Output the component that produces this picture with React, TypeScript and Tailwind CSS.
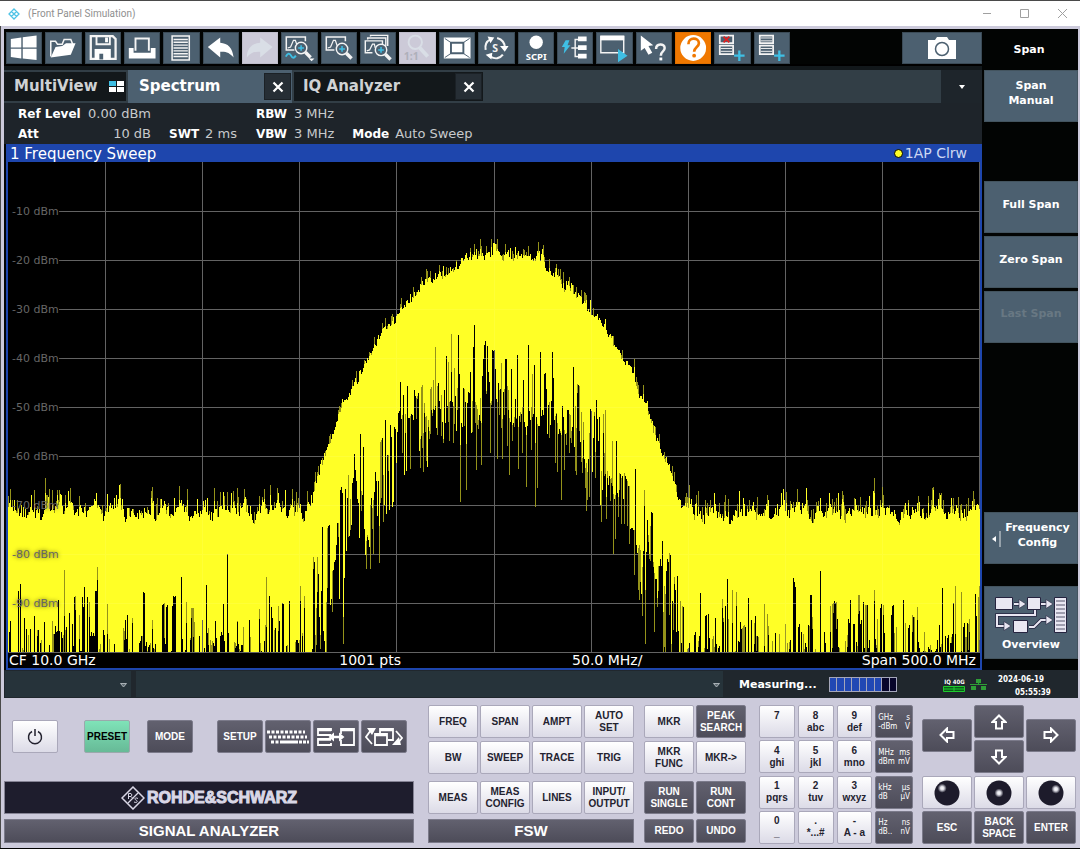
import React from "react";

type Kids = { children?: React.ReactNode };

const YELLOW = "#ffff26";

/* ---------- Spectrum trace ---------- */

// x, upper edge, deepest solid edge, lowest excursion (plot coordinates)
const ENVELOPE: number[][] = [
  [0, 350, 424, 535],
  [298, 350, 422, 535],
  [304, 338, 392, 520],
  [308, 320, 375, 505],
  [317, 290, 352, 485],
  [328, 262, 330, 450],
  [335, 239, 312, 430],
  [347, 222, 284, 412],
  [362, 194, 262, 392],
  [377, 168, 248, 370],
  [390, 154, 238, 340],
  [400, 139, 222, 318],
  [412, 128, 210, 300],
  [427, 114, 196, 288],
  [444, 110, 190, 284],
  [457, 101, 184, 278],
  [472, 96, 180, 272],
  [486, 94, 188, 268],
  [494, 97, 192, 264],
  [522, 98, 190, 278],
  [534, 100, 194, 284],
  [547, 114, 200, 282],
  [562, 129, 214, 294],
  [582, 150, 234, 316],
  [594, 161, 244, 332],
  [607, 186, 262, 352],
  [618, 200, 280, 388],
  [628, 222, 306, 408],
  [642, 258, 336, 425],
  [652, 284, 364, 455],
  [664, 320, 390, 500],
  [674, 345, 412, 525],
  [684, 352, 424, 535],
  [972, 350, 424, 535],
];

// Isolated deep notches reaching up into the solid area
const NOTCHES: number[][] = [
  [12, 422], [56, 408], [89, 405], [173, 415], [219, 392], [258, 415], [76, 425],
  [466, 163], [450, 173], [443, 172], [477, 179], [520, 183], [427, 185],
  [812, 409], [719, 417], [785, 416], [660, 400], [786, 420],
  [392, 220], [352, 272], [588, 238], [597, 248], [486, 188], [532, 190],
  [544, 190], [565, 205],
];

const SPIKES: number[][] = [
  [483, 85], [485, 81], [486, 81], [487, 82], [468, 87], [500, 88], [529, 89],
  [531, 89], [60, 329], [99, 332], [88, 331], [223, 331], [277, 328],
  [731, 329], [865, 329], [925, 328],
];

function random(seed: number) {
  let s = seed;
  return () => {
    s = (s + 0x6d2b79f5) | 0;
    let t = Math.imul(s ^ (s >>> 15), 1 | s);
    t = (t + Math.imul(t ^ (t >>> 7), 61 | t)) ^ t;
    return ((t ^ (t >>> 14)) >>> 0) / 4294967296;
  };
}

function buildTrace() {
  const rnd = random(4021);
  const notch = new Map(NOTCHES.map((n) => [n[0], n[1]] as [number, number]));
  const spike = new Map(SPIKES.map((n) => [n[0], n[1]] as [number, number]));
  let solid = "";
  let dim = "";
  let seg = 0;
  let drift = 0;
  let low = 0.5;
  for (let x = 0; x < 972; x++) {
    while (seg < ENVELOPE.length - 2 && x >= ENVELOPE[seg + 1][0]) seg++;
    const a = ENVELOPE[seg];
    const b = ENVELOPE[seg + 1];
    const t = (x - a[0]) / (b[0] - a[0]);
    const at = (i: number) => a[i] + (b[i] - a[i]) * t;
    const floor = x < 300 || x > 676;
    const amp = floor ? 1 : 0.6;
    drift = drift * 0.65 + (rnd() - 0.5) * 13 * amp;
    let top = at(1) + drift - Math.pow(rnd(), 5) * 16 * amp;
    if (rnd() < 0.72) low = rnd();
    const reach = Math.pow(low, floor ? 0.75 : 0.95);
    let bottom = at(2) + (at(3) - at(2)) * reach * (0.85 + rnd() * 0.15);
    if (!floor && rnd() < 0.04) bottom += 15 + rnd() * 35;
    if (notch.has(x)) bottom = notch.get(x)!;
    if (spike.has(x)) top = spike.get(x)!;
    bottom = Math.min(490, bottom);
    top = Math.round(top);
    bottom = Math.round(bottom);
    solid += `M${x + 0.5} ${top}V${bottom}`;
    if (rnd() < 0.4) {
      const down = Math.min(490, bottom + Math.round(rnd() * 65));
      dim += `M${x + 0.5} ${bottom}V${down}`;
    }
    if (rnd() < 0.3) {
      dim += `M${x + 0.5} ${top - Math.round(rnd() * 15 * amp + 2)}V${top}`;
    }
  }
  return { solid, dim };
}

const TRACE = buildTrace();
const ROWS = [1, 2, 3, 4, 5, 6, 7, 8, 9, 10].map((i) => i * 49 + 0.5);
const COLS = [97.5, 194.5, 291.5, 388.5, 486.5, 583.5, 680.5, 777.5, 874.5, 971.5];
const GRID =
  ROWS.map((y) => `M${y > 480 ? 0 : 51} ${y}H972`).join("") +
  COLS.map((x) => `M${x} 0V491`).join("");

function Plot() {
  return (
    <div className="relative bg-black">
      <svg
        viewBox="0 0 972 491"
        preserveAspectRatio="none"
        className="block h-[491px] w-full"
        shapeRendering="crispEdges"
        role="img"
        aria-label="Frequency sweep trace"
      >
        <path d={GRID} stroke="#565656" fill="none" />
        <path d={TRACE.dim} stroke="#94921a" fill="none" />
        <path d={TRACE.solid} stroke={YELLOW} fill="none" />
        <path d={GRID} stroke="#ffffff" strokeOpacity="0.08" fill="none" />
      </svg>
      <div className="absolute top-0 left-1 pt-[26px] text-[11px] text-[#666666] [text-shadow:0_0_4px_#000000aa]">
        {[10, 20, 30, 40, 50, 60, 70, 80, 90].map((v) => (
          <div key={v} className="flex h-[49px] items-center">
            -{v} dBm
          </div>
        ))}
      </div>
    </div>
  );
}

/* ---------- Toolbar ---------- */

const W = "#f4f4f4";
const C = "#3fbfe4";

const Ico = ({ children }: Kids) => (
  <svg viewBox="0 0 36 32" className="h-8 w-9" fill="none">
    {children}
  </svg>
);

const Magnifier = ({ x, y }: { x: number; y: number }) => (
  <g transform={`translate(${x} ${y})`}>
    <circle r="6" fill="#4c6070" stroke={W} strokeWidth="1.5" />
    <path d="M-3 0H3M0-3V3" stroke={C} strokeWidth="1.6" />
    <path d="M4.5 4.5L10 10" stroke={W} strokeWidth="3.6" />
  </g>
);

const Curve = () => <path d="M6 16l3-1 3-7 2 0 2 6" stroke={W} strokeWidth="1.3" />;

const TOOLS: { name: string; tone?: string; icon: React.ReactNode }[] = [
  { name: "Windows", icon: <path d="M4 6.5L15 5v10.400H4zM16.500 4.800L31 3v12.400H16.500zM4 16.800h11V27L4 25.500zM16.500 16.800H31V28.500L16.500 27z" fill="#fff" /> },
  { name: "Open", icon: (<><path d="M5 25V9h5l2 3h5l2-5h7l2 5" stroke={W} strokeWidth="1.6" /><path d="M10 15l7-1 4-3h10l-5 12L5 26z" fill="#fff" /></>) },
  { name: "Save", icon: (<><path d="M5 3.500h23l3 3v21H5z" stroke={W} strokeWidth="2.400" /><path d="M11 4v8h14V4" stroke={W} strokeWidth="2" /><path d="M9 17h17v11H9z" fill="#fff" /><path d="M14 22h4v6h-4z" fill="#4c6070" /><path d="M20 5h3v5h-3z" fill="#fff" /></>) },
  { name: "Print", icon: (<><path d="M11 19V6h14v13" stroke={W} strokeWidth="2" /><path d="M4 16h5v5h18v-5h5v11H4z" fill="#fff" /></>) },
  { name: "Report", icon: (<><path d="M8.500 3.500h18v25h-18z" stroke={W} strokeWidth="1.600" /><path d="M10 7h15M10 10h15M10 13h15M10 16h15M10 19h15M10 22h15M10 25h15" stroke={W} strokeWidth="1.500" /></>) },
  { name: "Undo", icon: <path d="M4 15L17 5v5.500c8 .5 13 5.500 14 15.500-4-5-8-6.500-14-6v6z" fill="#fff" /> },
  { name: "Redo", tone: "off", icon: <path d="M31 15L18 5v5.500C10 11 4 16 4 26c4-5 8-6.500 14-6v6z" fill="#d9dee6" /> },
  { name: "Zoom menu", icon: (<><path d="M13 18H4.500V4.500h20V9" stroke={W} strokeWidth="1.600" /><Curve /><path d="M4 25c2-4 4-4 5.500-1s3 3 5 0" stroke={C} strokeWidth="2" /><Magnifier x={20} y={16} /><path d="M28 27h6l-3 3z" fill="#fff" /></>) },
  { name: "Zoom", icon: (<><path d="M13 18H4.500V4.500h20V9" stroke={W} strokeWidth="1.600" /><Curve /><Magnifier x={21} y={17} /></>) },
  { name: "Multi zoom", icon: (<><path d="M12 21H4.500V8.500h18V12M7 7V5.500h19V14M10 4V2.800h18V14" stroke={W} strokeWidth="1.500" /><path d="M6 19l3-1 3-6 2 0 1 4" stroke={W} strokeWidth="1.300" /><Magnifier x={21} y={18} /></>) },
  { name: "Zoom off", tone: "off", icon: (<><circle cx="16" cy="10" r="7" stroke="#d9dee6" strokeWidth="2" /><path d="M20 15l9 10" stroke="#d9dee6" strokeWidth="4" /><text x="4" y="29" fontSize="11" fontWeight="bold" fontFamily="Noto Sans, sans-serif" fill="#aeb0ba">1:1</text></>) },
  { name: "Display", icon: (<><path d="M4 5h28v22H4z" fill="#fff" /><path d="M11.500 10.500h13v11h-13z" fill="#fff" stroke="#4c6070" strokeWidth="2" /><path d="M5 6l6 4M31 6l-6 4M5 26l6-4M31 26l-6-4" stroke="#4c6070" strokeWidth="1" /></>) },
  { name: "Sequencer", icon: (<><path d="M7 18c-1-5 1-9 5-11M19 5.500c5 1.500 8 5 8 10M25 23c-3 4-8 5-13 2" stroke={W} strokeWidth="2.200" /><path d="M9 4l7 1-4 6zM22 14h9l-4 6zM14 21l-7 2 6 5z" fill="#fff" /><text x="14" y="20" fontSize="11" fontWeight="bold" fontFamily="Noto Sans, sans-serif" fill={W}>S</text></>) },
  { name: "SCPI", icon: (<><circle cx="18" cy="10" r="7" fill="#fff" /><text x="18" y="29" textAnchor="middle" fontSize="10" fontWeight="bold" fontFamily="Noto Sans, sans-serif" fill="#fff">SCPI</text></>) },
  { name: "Trigger tree", icon: (<><path d="M8 8h4l-2 5h3L6 22l1-7H4z" fill={C} /><path d="M14 16h8M22 7h-4v18h4" stroke={W} strokeWidth="1.500" /><path d="M21 4h9v5h-9zM21 13h9v5h-9zM21 22h9v5h-9z" fill="#fff" /></>) },
  { name: "Window", icon: (<><path d="M4 4h24v17H4z" stroke={W} strokeWidth="1.500" /><path d="M3.500 3h25v5h-25z" fill="#fff" /><path d="M22 17l10 7-10 7z" fill={C} /></>) },
  { name: "Context help", icon: (<><path d="M4 3l13 10-5 1 4 7-4 2-4-7-4 3z" fill="#fff" /><path d="M20 17c0-6 9-6 9-1 0 4-4 3-4 8" stroke={W} strokeWidth="2.600" /><path d="M23.500 26h3v3h-3z" fill="#fff" /></>) },
  { name: "Help", tone: "help", icon: (<><circle cx="18" cy="16" r="13.500" fill="#fff" /><path d="M13 12c0-8 11-7 11-1 0 4-5 4-5 9" stroke="#f07800" strokeWidth="2.800" /><circle cx="19" cy="24" r="2" fill="#f07800" /></>) },
  { name: "Remove from list", icon: (<><path d="M5 3h14v8H5zM5 13.500h14v9H5z" stroke={W} strokeWidth="1.800" /><path d="M9 4l6 6M15 4l-6 6" stroke="#e02020" strokeWidth="1.800" /><path d="M6 16.500h12M6 19.500h12" stroke={W} /><path d="M20 24h11M25.500 18.500v11" stroke={C} strokeWidth="2.400" /></>) },
  { name: "Add to list", icon: (<><path d="M5 3h14v8H5zM5 13.500h14v9H5z" stroke={W} strokeWidth="1.800" /><path d="M6 5.500h12M6 8.500h12M6 16.500h12M6 19.500h12" stroke={W} /><path d="M20 24h11M25.500 18.500v11" stroke={C} strokeWidth="2.400" /></>) },
];

const TOOL_TONES: Record<string, string> = {
  normal: "bg-[#4c6070] border-[#3b4b57]",
  off: "bg-[#cccad8] border-[#bfbdcb]",
  help: "bg-[#f07800] border-[#e07000]",
};

function Toolbar() {
  return (
    <div className="flex items-start justify-between border-b-2 border-black bg-[#020403] pt-[3px] pl-[2px]">
      <div className="grid w-[784px] grid-cols-20 gap-[3px]">
        {TOOLS.map((t) => (
          <button
            key={t.name}
            aria-label={t.name}
            className={`flex h-8 items-center justify-center overflow-hidden border ${TOOL_TONES[t.tone ?? "normal"]}`}
          >
            <Ico>{t.icon}</Ico>
          </button>
        ))}
      </div>
      <button aria-label="Screenshot" className="flex h-8 w-20 items-center justify-center border border-[#3b4b57] bg-[#4c6070]">
        <svg viewBox="0 0 28 22" className="h-[22px] w-7">
          <path d="M0 3h7l2-3h10l2 3h7v19H0z" fill="#fff" />
          <circle cx="14" cy="12" r="6.500" fill="none" stroke="#4c6070" strokeWidth="1.500" />
        </svg>
      </button>
    </div>
  );
}

/* ---------- Tabs and channel info ---------- */

const CloseX = ({ label }: { label: string }) => (
  <button aria-label={label} className="flex h-[27px] w-[27px] items-center justify-center border border-[#1b2126] bg-[#262e35]">
    <svg viewBox="0 0 12 12" className="size-3">
      <path d="M1.500 1.500l9 9M10.500 1.500l-9 9" stroke="#fff" strokeWidth="2.200" />
    </svg>
  </button>
);

function Tabs() {
  return (
    <div className="flex h-[33px] bg-[#323e46] text-[15px] font-bold">
      <button className="mt-[2px] mr-[2px] flex h-[29px] w-[122px] items-center justify-between bg-[#13181b] pr-[2px] pl-[10px] text-[#cfd2d4]">
        MultiView
        <svg viewBox="0 0 15 11" className="h-[11px] w-[15px]">
          <path d="M0 0h7v5H0z" fill={C} />
          <path d="M8 0h7v5H8zM0 6h7v5H0zM8 6h7v5H8z" fill="#fff" />
        </svg>
      </button>
      <div className="flex w-[164px] items-center justify-between bg-[#4c6070] pr-px pl-[11px] text-white">
        <button>Spectrum</button>
        <CloseX label="Close Spectrum" />
      </div>
      <div className="mt-[2px] ml-[2px] flex h-[29px] w-[189px] items-center justify-between bg-[#13181b] pr-px pl-[9px] text-[#cfd2d4]">
        <button>IQ Analyzer</button>
        <CloseX label="Close IQ Analyzer" />
      </div>
      <button aria-label="More tabs" className="ml-auto flex w-[41px] items-center justify-center bg-[#1e252b]">
        <svg viewBox="0 0 6 4" className="h-1 w-[6px]">
          <path d="M0 0h6L3 4z" fill="#fff" />
        </svg>
      </button>
    </div>
  );
}

const K = ({ children }: Kids) => <b className="text-[12px] text-white">{children}</b>;

function ChannelInfo() {
  return (
    <div className="grid grid-cols-[133px_69px_auto_1fr] grid-rows-[20px_20px] gap-x-[18px] bg-[#1e242a] pt-px pl-[14px] text-[13px] leading-[22px] text-[#c8cacc]">
      <div className="flex items-center justify-between"><K>Ref Level</K><span>0.00 dBm</span></div>
      <span />
      <div className="flex items-center gap-[7px]"><K>RBW</K><span>3 MHz</span></div>
      <span />
      <div className="flex items-center justify-between"><K>Att</K><span>10 dB</span></div>
      <div className="flex items-center gap-[6px]"><K>SWT</K><span className="whitespace-nowrap">2 ms</span></div>
      <div className="flex items-center gap-[7px]"><K>VBW</K><span>3 MHz</span></div>
      <div className="flex items-center gap-[6px]"><K>Mode</K><span>Auto Sweep</span></div>
    </div>
  );
}

/* ---------- Softkeys ---------- */

const SOFT = "flex h-[52px] w-full items-center justify-center border border-[#43545f] bg-[#4c6070] pb-[6px] text-center text-[11px] leading-[15px] font-bold text-white";

function Softkeys() {
  return (
    <aside className="flex w-[96px] flex-col gap-[3px] bg-[#020403] pl-[2px]">
      <h2 className="flex h-[38px] items-center justify-center pt-1 pr-1 text-[11px] font-bold text-white">Span</h2>
      <button className={SOFT}>Span<br />Manual</button>
      <div className="h-[53px]" />
      <button className={SOFT}>Full Span</button>
      <button className={SOFT}>Zero Span</button>
      <button disabled className="flex h-[52px] w-full items-center justify-center border border-[#43545f] bg-[#4c6070] pb-[6px] text-[11px] font-bold text-[#687883]">Last Span</button>
      <div className="h-[163px]" />
      <button className={SOFT}>
        <svg viewBox="0 0 9 16" className="mt-2 mr-1 h-4 w-[9px]">
          <path d="M4 5v6L0 8z" fill="#fff" />
          <path d="M8 0v16" stroke="#dfe3e6" />
        </svg>
        <span>Frequency<br />Config</span>
      </button>
      <button className="mt-[19px] flex h-[73px] w-full flex-col items-center justify-end gap-[5px] border border-[#43545f] bg-[#4c6070] pb-[6px] text-[11px] leading-[14px] font-bold text-white">
        <svg viewBox="0 0 72 36" className="h-9 w-[72px]" fill="none">
          <g fill="#e9e7f2" stroke="#25233f">
            <path d="M.5.5h17v12H.5zM32.500.5h13v12h-13zM18.500 23.500h14v12h-14z" />
            <path d="M59.500.5h12v35h-12z" />
          </g>
          <path d="M19 7h6M46 7h6M40 13v5H2v11h8M34 30h5l7-7h6" stroke="#25233f" strokeWidth="3.500" />
          <path d="M19 7h6M46 7h6M40 13v5H2v11h8M34 30h5l7-7h6" stroke="#e9e7f2" strokeWidth="2" />
          <path d="M24 2.500L31 7l-7 4.500zM51 2.500L58 7l-7 4.500zM9 24.500l7 4.500-7 4.500zM51 18.500l7 4.500-7 4.500z" fill="#e9e7f2" stroke="#25233f" strokeWidth=".6" />
          <path d="M61 4h9M61 8h9M61 12h9M61 16h9M61 20h9M61 24h9M61 28h9M61 32h9" stroke="#55546a" />
        </svg>
        Overview
      </button>
    </aside>
  );
}

/* ---------- Status bar ---------- */

const DropMark = () => (
  <svg viewBox="0 0 7 5" className="h-[5px] w-[7px]">
    <path d="M.5.5h6L3.500 4z" fill="#5f6b72" stroke="#a8b0b5" />
  </svg>
);

function StatusBar() {
  return (
    <footer className="flex h-7 items-center bg-[#20272d] font-bold text-white">
      <button aria-label="Status list" className="mr-[5px] ml-px flex h-[26px] w-[126px] items-center justify-end bg-[#26333a] pt-[2px] pr-1"><DropMark /></button>
      <button aria-label="Message list" className="flex h-[26px] flex-1 items-center justify-end bg-[#26333a] pt-[2px] pr-[3px]"><DropMark /></button>
      <span className="ml-4 w-[90px] pt-[2px] text-[11px]">Measuring...</span>
      <div className="flex h-[15px] w-[68px] gap-px border border-[#a4a6ba] bg-[#a4a6ba]">
        {[0, 1, 2, 3, 4, 5, 6].map((i) => (
          <i key={i} className="flex-1 bg-[#2148b4]" />
        ))}
        <i className="flex-1 bg-[#07052b]" />
        <i className="flex-1 bg-[#07052b]" />
      </div>
      <div className="ml-[46px] w-[23px] text-center font-['DejaVu_Sans_Condensed','DejaVu_Sans',sans-serif] text-[6px] leading-[9px] whitespace-nowrap">
        IQ 40G
        <svg viewBox="0 0 22 6" className="h-[6px] w-[22px]">
          <path d="M.5.5h21v5H.5zM11 0v6M0 3h22" fill="#0b5c18" stroke="#1ecb2e" />
        </svg>
      </div>
      <svg viewBox="0 0 17 12" className="mr-[9px] ml-[4px] h-3 w-[17px]">
        <path d="M6 1h5v4H6zM1 8h5v4H1zM11 8h5v4h-5z" fill="#2f9e37" />
        <path d="M0 6.500h17M8.500 4v3" stroke="#2f9e37" />
      </svg>
      <div className="w-[82px] pt-[3px] pl-[2px] font-['DejaVu_Sans_Condensed','DejaVu_Sans',sans-serif] text-[8px] leading-[13px]">
        <div>2024-06-19</div>
        <div className="pl-[17px]">05:55:39</div>
      </div>
    </footer>
  );
}

/* ---------- Front panel keys ---------- */

const KEY_TONES: Record<string, string> = {
  light: "border-[#aaa8ba] bg-linear-to-b from-white to-[#dcdbe7] text-[#23222f]",
  dark: "border-[#7b7a8a] bg-linear-to-b from-[#62616f] to-[#4d4c59] text-white",
  green: "border-[#9aa9ac] bg-linear-to-b from-[#7fe3b8] to-[#67ba97] text-black",
};

function Key({ tone = "light", className = "h-[33px]", label, children }: Kids & { tone?: string; className?: string; label?: string }) {
  return (
    <button
      aria-label={label}
      className={`flex min-w-0 items-center justify-center rounded-[2px] border text-center leading-3 whitespace-pre-line ${KEY_TONES[tone]} ${className}`}
    >
      {children}
    </button>
  );
}

function SystemKeys() {
  const size = "h-[33px] w-[46px]";
  return (
    <section className="flex flex-[410] flex-col">
      <div className="mt-[15px] flex pl-2">
        <Key className={size} label="Power">
          <svg viewBox="0 0 16 16" className="size-4" fill="none" stroke="#23222f" strokeWidth="1.500">
            <path d="M5 2.500a6.500 6.500 0 1 0 6 0M8 0v7" />
          </svg>
        </Key>
        <Key tone="green" className="ml-[26px] h-[33px] w-[46px]">PRESET</Key>
        <Key tone="dark" className="ml-[17px] h-[33px] w-[46px]">MODE</Key>
        <div className="ml-6 flex gap-[2px]">
          <Key tone="dark" className={size}>SETUP</Key>
          <Key tone="dark" className={size} label="Keyboard">
            <svg viewBox="0 0 42 14" className="h-[14px] w-[42px]">
              <path d="M0 2h38M2 7h38M4 12h8" stroke="#fff" strokeWidth="3" strokeDasharray="3 1.500" />
              <path d="M13 12h18" stroke="#fff" strokeWidth="3" />
              <path d="M32 12h10" stroke="#fff" strokeWidth="3" strokeDasharray="3 1" />
            </svg>
          </Key>
          <Key tone="dark" className={size} label="Split screen">
            <svg viewBox="0 0 38 18" className="h-[18px] w-[38px]" fill="none" stroke="#fff" strokeWidth="1.800">
              <path d="M14 7H1V1h13v2M14 11H1v6h13v-2M24 6V1h13v16H24v-5" />
              <path d="M1 2h13M1 11.500h13M24 2h13" strokeWidth="2.500" />
              <path d="M15 9h9" strokeWidth="2.500" />
              <path d="M17 4.500v9L11.500 9zM22 4.500v9L27.500 9z" fill="#fff" stroke="none" />
            </svg>
          </Key>
          <Key tone="dark" className={size} label="Switch window">
            <svg viewBox="0 0 38 20" className="h-5 w-[38px]" fill="none" stroke="#fff" strokeWidth="1.800">
              <path d="M15 6V2h13v11h-5" />
              <path d="M10 7h12v11H10z" />
              <path d="M10 8h12M15 3h13" strokeWidth="2.500" />
              <path d="M7 17L1 10l5-7M31 4l6 7-5 6" />
              <path d="M2 1h9l-4 7zM27 18h9l-2-8z" fill="#fff" stroke="none" />
            </svg>
          </Key>
        </div>
      </div>
      <div className="mt-7 flex h-[33px] items-center justify-center gap-[2px] border border-[#858394] bg-[#1e1d2d] text-[16px] font-bold text-[#d9d7e6]">
        <svg viewBox="0 0 24 24" className="size-6" fill="none" stroke="#d9d7e6">
          <path d="M12 1L23 12 12 23 1 12z" strokeWidth="1.500" />
          <path d="M7 17L17 7" strokeWidth="1.300" />
          <path d="M7.500 13V7.500H10q2 1.500 0 3H7.500M10 10.500l2 2M17 12.500c-3-1.500-4 .5-2 1.500s1.500 3.500-2 2" />
        </svg>
        <span className="[-webkit-text-stroke:1px_#d9d7e6]">ROHDE&amp;SCHWARZ</span>
      </div>
      <div className="mt-[5px] flex h-6 items-center justify-center border border-[#7b7a8a] bg-linear-to-b from-[#62616f] to-[#4d4c59] pt-px text-[15px] font-bold text-white">
        SIGNAL ANALYZER
      </div>
    </section>
  );
}

type Row = [string, string?][];

const KeyRow = ({ keys, className }: { keys: Row; className: string }) => (
  <div className={className}>
    {keys.map(([text, tone]) => (
      <Key key={text} tone={tone} className="h-full flex-1">{text}</Key>
    ))}
  </div>
);

function FunctionKeys() {
  return (
    <section className="ml-[14px] flex flex-[206] flex-col">
      <KeyRow className="flex h-[33px] gap-[2px]" keys={[["FREQ"], ["SPAN"], ["AMPT"], ["AUTO\nSET"]]} />
      <KeyRow className="mt-[3px] flex h-[33px] gap-[2px]" keys={[["BW"], ["SWEEP"], ["TRACE"], ["TRIG"]]} />
      <KeyRow className="mt-[7px] flex h-[33px] gap-[2px]" keys={[["MEAS"], ["MEAS\nCONFIG"], ["LINES"], ["INPUT/\nOUTPUT"]]} />
      <div className="mt-[5px] flex h-6 items-center justify-center border border-[#7b7a8a] bg-linear-to-b from-[#62616f] to-[#4d4c59] pt-px text-[15px] font-bold text-white">FSW</div>
    </section>
  );
}

function MarkerKeys() {
  return (
    <section className="ml-[10px] flex flex-[102] flex-col">
      <KeyRow className="flex h-[33px] gap-[2px]" keys={[["MKR"], ["PEAK\nSEARCH", "dark"]]} />
      <KeyRow className="mt-[3px] flex h-[33px] gap-[2px]" keys={[["MKR\nFUNC"], ["MKR->"]]} />
      <KeyRow className="mt-[7px] flex h-[33px] gap-[2px]" keys={[["RUN\nSINGLE", "dark"], ["RUN\nCONT", "dark"]]} />
      <KeyRow className="mt-[5px] flex h-6 gap-[2px]" keys={[["REDO", "dark"], ["UNDO", "dark"]]} />
    </section>
  );
}

const PAD: { keys: string[]; unit: string[] }[] = [
  { keys: ["7\n\u00a0", "8\nabc", "9\ndef"], unit: ["GHz", "s", "-dBm", "V"] },
  { keys: ["4\nghi", "5\njkl", "6\nmno"], unit: ["MHz", "ms", "dBm", "mV"] },
  { keys: ["1\npqrs", "2\ntuv", "3\nwxyz"], unit: ["kHz", "µs", "dB", "µV"] },
  { keys: ["0\n_", ".\n*...#", "-\nA - a"], unit: ["Hz", "ns", "dB..", "nV"] },
];

function NumberPad() {
  return (
    <section className="ml-[13px] grid flex-[154] grid-cols-[36fr_36fr_36fr_38fr] gap-x-[3px] gap-y-[2px]">
      {PAD.map((row) => (
        <React.Fragment key={row.unit[0]}>
          {row.keys.map((k) => (
            <Key key={k}>{k}</Key>
          ))}
          <Key tone="dark">
            <span className="grid w-full grid-cols-[auto_auto] justify-between px-[2px] text-left font-['DejaVu_Sans_Condensed','DejaVu_Sans',sans-serif] text-[8px] leading-[9px] font-normal">
              {row.unit.map((u, i) => (
                <span key={u} className={i % 2 ? "text-right" : ""}>{u}</span>
              ))}
            </span>
          </Key>
        </React.Fragment>
      ))}
    </section>
  );
}

const TURN: Record<string, string> = { up: "size-4", right: "size-4 rotate-90", down: "size-4 rotate-180", left: "size-4 -rotate-90" };

const ArrowKey = ({ dir }: { dir: string }) => (
  <Key tone="dark" label={`Arrow ${dir}`} className="h-[33px] w-full">
    <svg viewBox="0 0 16 16" className={TURN[dir]}>
      <path d="M8 1.500L14.500 8H11v6.500H5V8H1.500z" fill="none" stroke="#fff" strokeWidth="2" />
    </svg>
  </Key>
);

const BallKey = ({ cx, cy, label }: { cx: number; cy: number; label: string }) => (
  <Key label={label}>
    <svg viewBox="0 0 26 26" className="size-[26px]">
      <defs>
        <radialGradient id={`glow${cx}`} cx={cx / 26} cy={cy / 26} r="0.180">
          <stop offset="0" stopColor="#ffffff" />
          <stop offset="0.400" stopColor="#dcdce4" />
          <stop offset="1" stopColor="#1d1b2b" />
        </radialGradient>
      </defs>
      <circle cx="13" cy="13" r="12.500" fill={`url(#glow${cx})`} />
    </svg>
  </Key>
);

function Navigation() {
  return (
    <section className="ml-[9px] grid flex-[154] grid-cols-3 grid-rows-[69px_33px_33px] gap-x-[2px] gap-y-[2px]">
      <div className="flex items-center pb-[9px]"><ArrowKey dir="left" /></div>
      <div className="flex flex-col gap-[2px]"><ArrowKey dir="up" /><ArrowKey dir="down" /></div>
      <div className="flex items-center pb-[9px]"><ArrowKey dir="right" /></div>
      <BallKey cx={8} cy={8} label="Rotary left" />
      <BallKey cx={13} cy={13} label="Rotary press" />
      <BallKey cx={18} cy={9} label="Rotary right" />
      <Key tone="dark">ESC</Key>
      <Key tone="dark">{"BACK\nSPACE"}</Key>
      <Key tone="dark">ENTER</Key>
    </section>
  );
}

/* ---------- Window ---------- */

function TitleBar() {
  return (
    <header className="flex h-[26px] items-center border-t border-[#4a4a4a] bg-white pr-3 pl-2 font-[Roboto,sans-serif] text-[10px] text-[#8f8f8f]">
      <svg viewBox="0 0 12 12" className="mr-2 size-3" fill="none" stroke="#4ec3e6" strokeWidth="1.300">
        <path d="M6 1l5 5-5 5-5-5zM3.500 3.500l5 5M8.500 3.500l-5 5" />
      </svg>
      <h1>(Front Panel Simulation)</h1>
      <div className="ml-auto flex items-center gap-7">
        <button aria-label="Minimize">
          <svg viewBox="0 0 10 10" className="size-[10px]" stroke="#a0a0a0"><path d="M1 4.500h8" /></svg>
        </button>
        <button aria-label="Maximize">
          <svg viewBox="0 0 10 10" className="size-[10px]" fill="none" stroke="#a0a0a0"><path d="M.5.5h8v8h-8z" /></svg>
        </button>
        <button aria-label="Close">
          <svg viewBox="0 0 10 10" className="size-[10px]" stroke="#a0a0a0"><path d="M0 0l9 9M9 0L0 9" /></svg>
        </button>
      </div>
    </header>
  );
}

export default function App() {
  return (
    <div className="w-full border-b-2 border-black bg-[#cccadb] font-['DejaVu_Sans',Verdana,sans-serif]">
      <TitleBar />
      <div className="border-l border-[#4a4a4a] pt-[3px] pr-[2px] pl-[3px]">
        <div className="flex bg-[#020403]">
          <main className="min-w-0 flex-1">
            <Toolbar />
            <div className="h-1 bg-[#12181b]" />
            <Tabs />
            <ChannelInfo />
            <section className="ml-[2px] border-x-2 border-b-2 border-[#1e46ad]">
              <div className="flex h-[18px] items-center justify-between bg-[#1e46ad] pt-px pr-[13px] pl-[2px] text-white">
                <h3 className="text-[15px] leading-[18px]">1 Frequency Sweep</h3>
                <span className="flex items-center gap-[2px] text-[14px] text-[#cdd8f2]">
                  <i className="size-[9px] rounded-full border border-black bg-[#ffff26]" />
                  1AP Clrw
                </span>
              </div>
              <Plot />
              <div className="grid h-[15px] grid-cols-[332fr_234fr_406fr] items-center bg-black pr-1 pl-px text-[14px] leading-[15px] text-white">
                <span>CF 10.0 GHz</span>
                <span>1001 pts</span>
                <span className="flex justify-between"><span>50.0 MHz/</span><span>Span 500.0 MHz</span></span>
              </div>
            </section>
          </main>
          <Softkeys />
        </div>
        <StatusBar />
      </div>
      <div className="flex border-l border-[#4a4a4a] pt-[7px] pr-1 pb-1 pl-[3px] font-['Liberation_Sans',Arial,sans-serif] text-[10px] font-bold">
        <SystemKeys />
        <FunctionKeys />
        <MarkerKeys />
        <NumberPad />
        <Navigation />
      </div>
    </div>
  );
}
